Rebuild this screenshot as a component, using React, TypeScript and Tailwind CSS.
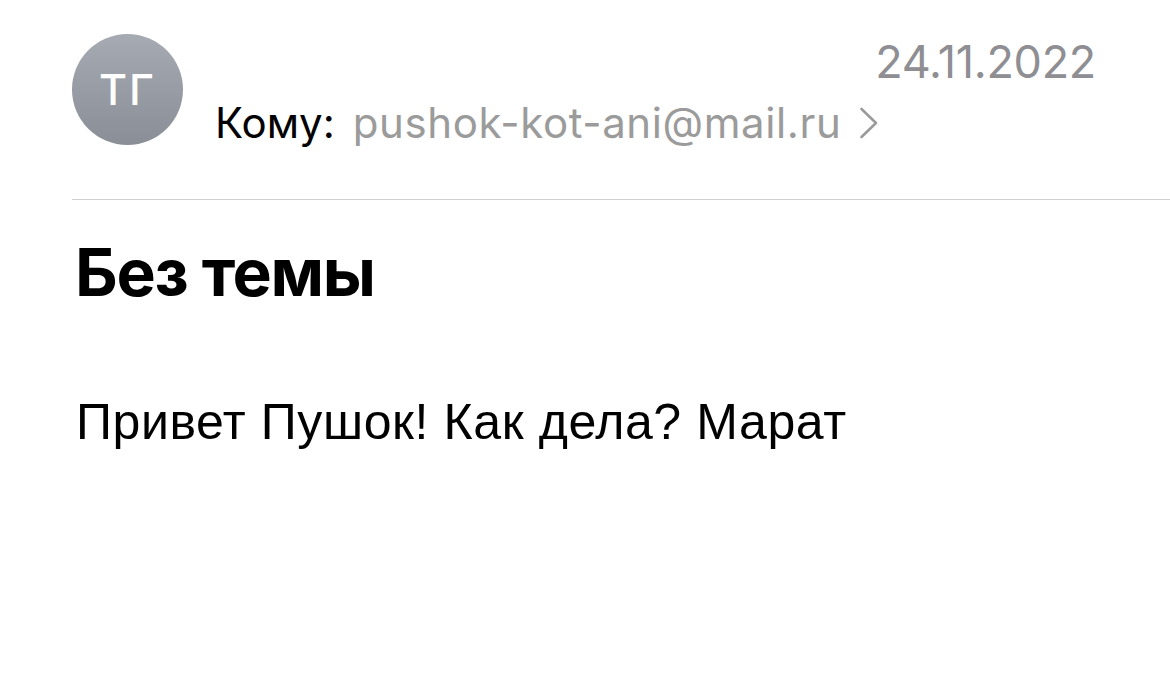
import React from "react";

export default function App() {
  return (
    <div className="w-[1170px] h-[676px] bg-white overflow-hidden pl-[72px] pt-[34px]" style={{ fontFamily: "Inter, 'Noto Sans', sans-serif" }}>
      <div className="flex items-start pr-[74px]">
        <div className="w-[111px] h-[111px] rounded-full bg-gradient-to-b from-[#a6aab2] to-[#8a8e97] flex items-center justify-center shrink-0">
          <span className="text-white text-[43px] leading-none font-medium tracking-[2px]">ТГ</span>
        </div>
        <div className="ml-[32px] flex-1 flex flex-col">
          <div className="h-[69px] flex justify-between items-start pt-[5px]">
            <span></span>
            <span className="text-[45px] leading-[45px] text-[#8e8e93] tracking-[-0.3px]">24.11.2022</span>
          </div>
          <div className="flex items-center text-[42px] leading-[41px] -mt-[1px]">
            <span className="text-black">Кому:</span>
            <span className="ml-[18px] text-[#9b9b9b] tracking-[0.6px]">pushok-kot-ani@mail.ru</span>
            <svg className="ml-[18px]" width="20" height="32" viewBox="0 0 20 32" fill="none">
              <path d="M2.5 2 L17 16 L2.5 30" stroke="#9b9b9b" strokeWidth="2.6" strokeLinecap="round" strokeLinejoin="round" />
            </svg>
          </div>
        </div>
      </div>
      <div className="mt-[54px] h-px bg-[#cfcfcf]"></div>
      <div className="mt-[39px] pl-[3px] text-[66px] leading-[66px] font-bold text-black tracking-[-1.3px]">Без темы</div>
      <div className="mt-[93px] pl-[4px] text-[50px] leading-[49px] text-black tracking-[0.6px]" style={{ fontFamily: "'Liberation Sans', Arial, sans-serif" }}>
        Привет Пушок! Как дела? Марат
      </div>
    </div>
  );
}
